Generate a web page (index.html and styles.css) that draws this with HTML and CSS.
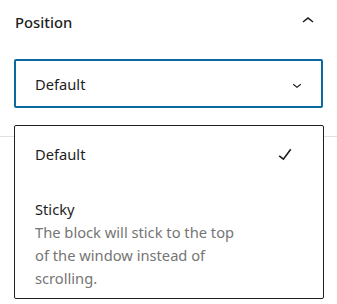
FILE: index.html
```html
<!DOCTYPE html>
<html>
<head>
<meta charset="utf-8">
<link rel="stylesheet" href="styles.css">
</head>
<body>
<div class="panel">
  <div class="header">
    <span class="title">Position</span>
    <svg class="chev-up" width="24" height="24" viewBox="0 0 24 24"><path d="M6.5 12.4L12 8l5.5 4.4-.9 1.2L12 10l-4.6 3.6-.9-1.2z" fill="#1e1e1e"/></svg>
  </div>
  <div class="select">
    <span>Default</span>
    <svg class="chev-down" width="18" height="18" viewBox="0 0 24 24"><path d="M17.5 11.6L12 16l-5.5-4.4.9-1.2L12 14l4.6-3.6.9 1.2z" fill="#1e1e1e"/></svg>
  </div>
</div>
<div class="divider"></div>
<div class="menu">
  <div class="option selected">
    <span>Default</span>
    <svg class="check" width="26" height="26" viewBox="0 0 24 24"><path d="M16.7 7.1l-6.3 8.5-3.3-2.5-.9 1.2 4.5 3.4L17.9 8z" fill="#1e1e1e"/></svg>
  </div>
  <div class="option sticky">
    <div class="label">Sticky</div>
    <div class="desc">The block will stick to the top of the window instead of scrolling.</div>
  </div>
</div>
</body>
</html>
```
FILE: styles.css
```css
html, body {
  margin: 0;
  padding: 0;
  background: #fff;
}
body {
  font-family: "Noto Sans", "Open Sans", sans-serif;
  color: #1e1e1e;
  width: 337px;
  height: 304px;
  position: relative;
  overflow: hidden;
}
.panel {
  padding: 0 14px;
}
.header {
  height: 44px;
  display: flex;
  align-items: center;
  justify-content: space-between;
  padding-left: 1px;
}
.title {
  font-size: 14.8px;
  font-weight: 500;
}
.chev-up {
  margin-right: 3px;
  margin-top: -2px;
}
.select {
  margin-top: 15px;
  height: 49px;
  box-sizing: border-box;
  border: 2px solid #0b6aa0;
  border-radius: 2px;
  display: flex;
  align-items: center;
  justify-content: space-between;
  padding: 0 15px 0 19px;
  font-size: 14.7px;
}
.chev-down {
  margin-top: 2px;
}
.divider {
  margin-top: 28px;
  height: 1px;
  background: #e0e0e0;
}
.menu {
  position: absolute;
  left: 14px;
  top: 125px;
  width: 310px;
  height: 174px;
  box-sizing: border-box;
  border: 1px solid #1e1e1e;
  border-radius: 2px;
  background: #fff;
  padding: 8px 0 0 0;
  font-size: 14.7px;
}
.option {
  padding: 0 27px 0 20px;
}
.option.selected {
  display: flex;
  align-items: center;
  justify-content: space-between;
  height: 40px;
}
.check {
  margin-top: -1px;
  margin-right: -2px;
}
.option.sticky {
  margin-top: 24px;
  line-height: 23px;
}
.desc {
  color: #757575;
  width: 216px;
}
```
